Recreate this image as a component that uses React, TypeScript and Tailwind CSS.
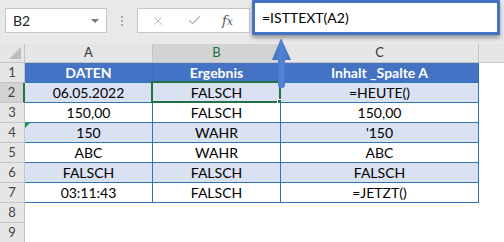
import { Check, X } from "lucide-react";

const rows: string[][] = [
	["DATEN", "Ergebnis", "Inhalt _Spalte A"],
	["06.05.2022", "FALSCH", "=HEUTE()"],
	["150,00", "FALSCH", "150,00"],
	["150", "WAHR", "'150"],
	["ABC", "WAHR", "ABC"],
	["FALSCH", "FALSCH", "FALSCH"],
	["03:11:43", "FALSCH", "=JETZT()"],
];

const colWidths = ["w-[128px]", "w-[128px]", "w-[198px]"];

function Toolbar() {
	return (
		<div className="flex h-[44px] items-start bg-[#e9e9e9]">
			<div className="ml-[5px] mt-[8px] flex h-[25px] w-[102px] items-center justify-between border border-[#c6c6c6] bg-white pl-[7px] pr-[7px] text-[14px] text-[#222]">
				<span>B2</span>
				<span className="h-0 w-0 border-x-[4px] border-t-[4px] border-x-transparent border-t-[#777]" />
			</div>
			<div className="ml-[14px] mt-[16px] flex w-[2px] flex-col gap-[2px]">
				<span className="h-[2px] w-[2px] bg-[#a6a6a6]" />
				<span className="h-[2px] w-[2px] bg-[#a6a6a6]" />
				<span className="h-[2px] w-[2px] bg-[#a6a6a6]" />
			</div>
			<div className="ml-[14px] mt-[8px] flex h-[25px] w-[113px] items-center border border-[#c6c6c6] bg-white text-[#b4b4b4]">
				<X className="ml-[13px] h-[14px] w-[14px]" strokeWidth={1.5} />
				<Check className="ml-[22px] h-[15px] w-[15px]" strokeWidth={2} />
				<span className="ml-[20px] font-['DejaVu_Serif'] text-[13px] italic text-[#555]">
					f<span className="text-[11px]">x</span>
				</span>
			</div>
			<div className="ml-[2px] flex h-[35px] w-[248px] items-center border-[3px] border-[#4472c4] bg-white pl-[7px] text-[14px] text-black shadow-[0_3px_4px_rgba(0,0,0,0.35)]">
				=ISTTEXT(A2)
			</div>
		</div>
	);
}

function ColumnHeaders() {
	return (
		<div className="flex h-[19px] border-b border-[#c4c4c4] bg-[#e6e6e6] text-[13px] text-[#333]">
			<div className="relative w-[25px] border-r border-[#c4c4c4]">
				<span className="absolute bottom-[3px] right-[3px] h-0 w-0 border-b-[12px] border-l-[12px] border-b-[#bdbdbd] border-l-transparent" />
			</div>
			{["A", "B", "C"].map((c, i) => (
				<div
					key={c}
					className={`${colWidths[i]} flex items-center justify-center border-r border-[#c4c4c4] ${
						c === "B" ? "bg-[#d3d3d3] text-[#1e6b3f]" : ""
					}`}
				>
					{c}
				</div>
			))}
			<div className="flex-1" />
		</div>
	);
}

function DataRow({ n, cells }: { n: number; cells?: string[] }) {
	const isHead = n === 1;
	const isBand = n === 2 || n === 4 || n === 6;
	const rowBg = isHead ? "bg-[#4472c4] font-bold" : isBand ? "bg-[#d9e1f2]" : "bg-white";
	return (
		<div className="flex h-[20px] text-[14px]">
			<div
				className={`flex w-[25px] items-center justify-center border-b border-r text-[13px] text-[#444] ${
					n === 2 ? "border-r-2 border-b-[#c4c4c4] border-r-[#217346] bg-[#d3d3d3] text-[#1e6b3f]" : "border-[#c4c4c4] bg-[#e6e6e6]"
				}`}
			>
				{n}
			</div>
			{cells ? (
				cells.map((text, i) => (
					<div
						key={i}
						className={`${colWidths[i]} relative flex items-center justify-center border-b border-r border-[#2e75b6] ${rowBg}`}
					>
						{n === 4 && i === 0 && (
							<span className="absolute left-0 top-0 h-0 w-0 border-r-[5px] border-t-[5px] border-r-transparent border-t-[#1f9a3c]" />
						)}
						{n === 2 && i === 1 && (
							<span className="absolute -left-[2px] -top-[2px] h-[22px] w-[130px] border-2 border-[#217346]">
								<span className="absolute -bottom-[4px] -right-[4px] h-[6px] w-[6px] border border-white bg-[#217346]" />
							</span>
						)}
						<span className={isHead ? "text-white" : "text-black"}>{text}</span>
					</div>
				))
			) : (
				<div className="flex-1 bg-white" />
			)}
			{cells && <div className="flex-1 bg-white" />}
		</div>
	);
}

function Arrow() {
	return (
		<svg className="absolute left-[270px] top-[37px]" width="24" height="52" viewBox="0 0 24 52">
			<defs>
				<linearGradient id="arrowFill" x1="0" x2="1" y1="0" y2="0">
					<stop offset="0" stopColor="#3f6dbf" />
					<stop offset="0.5" stopColor="#5384d4" />
					<stop offset="1" stopColor="#3f6dbf" />
				</linearGradient>
			</defs>
			<path
				d="M11 1 L21 23 L15 23 L15 48 Q15 51 11.5 51 Q8 51 8 48 L8 23 L2 23 Z"
				fill="url(#arrowFill)"
			/>
		</svg>
	);
}

export default function App() {
	return (
		<div className="relative h-[242px] w-[504px] overflow-hidden bg-white font-['Lato'] select-none">
			<Toolbar />
			<ColumnHeaders />
			{[1, 2, 3, 4, 5, 6, 7, 8, 9].map((n) => (
				<DataRow key={n} n={n} cells={rows[n - 1]} />
			))}
			<Arrow />
		</div>
	);
}
